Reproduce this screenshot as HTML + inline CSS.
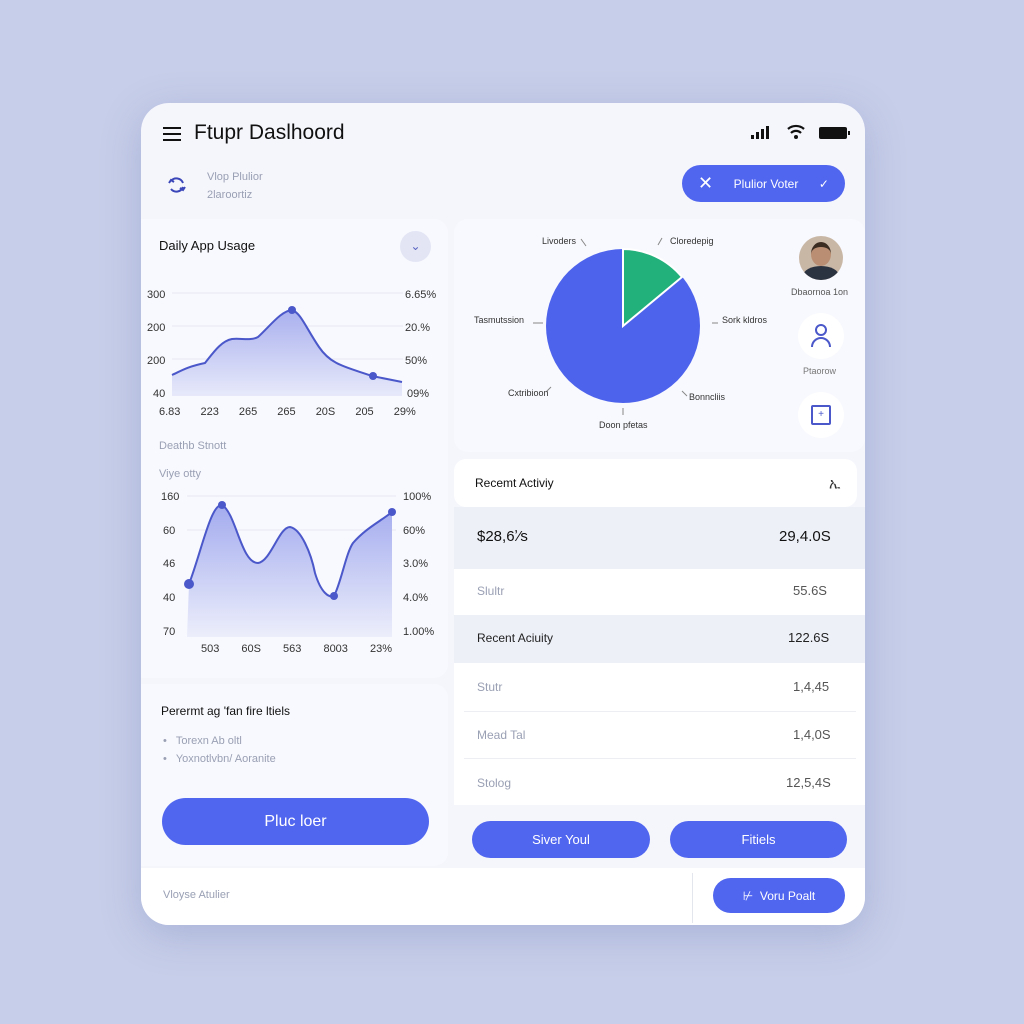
<!DOCTYPE html>
<html><head><meta charset="utf-8"><style>
*{margin:0;padding:0;box-sizing:border-box}
body{width:1024px;height:1024px;background:#c6cee9;font-family:"Liberation Sans",sans-serif;position:relative;overflow:hidden}
.a{position:absolute}
.card{left:141px;top:103px;width:724px;height:822px;background:#f5f6fc;border-radius:28px;overflow:hidden;box-shadow:0 10px 40px rgba(90,100,170,.25)}
.t{position:absolute;white-space:nowrap}
.btn{position:absolute;background:#5166ef;border-radius:24px;color:#fff;display:flex;align-items:center;justify-content:center;font-size:14px}
.s{font-size:11px;color:#333}
.g{color:#9aa0b4}
</style></head><body>
<div class="a card">
 <!-- header -->
 <div class="a" style="left:22px;top:24px;width:18px;height:2px;background:#111;box-shadow:0 6px 0 #111,0 12px 0 #111"></div>
 <div class="t" style="left:53px;top:18px;font-size:21px;color:#111">Ftupr Daslhoord</div>
 <svg class="a" style="left:610px;top:20px" width="105" height="20">
  <rect x="0" y="12" width="3" height="4" fill="#111"/><rect x="5" y="9" width="3" height="7" fill="#111"/><rect x="10" y="6" width="3" height="10" fill="#111"/><rect x="15" y="3" width="3" height="13" fill="#111"/>
  <path d="M37 6a12 12 0 0 1 16 0M40 10a7 7 0 0 1 10 0" stroke="#111" stroke-width="2.2" fill="none"/><circle cx="45" cy="14" r="2" fill="#111"/>
  <rect x="68" y="4" width="28" height="12" rx="2" fill="#111"/><rect x="97" y="8" width="2" height="4" fill="#111"/>
 </svg>
 <svg class="a" style="left:24px;top:70px" width="24" height="24"><path d="M6 8a7 7 0 0 1 12 2M18 14a7 7 0 0 1-12 2M4 10l2-3 3 2M20 14l-2 3-3-2" stroke="#3b47b8" stroke-width="2" fill="none"/></svg>
 <div class="t g" style="left:66px;top:68px;font-size:11px">Vlop Plulior</div>
 <div class="t g" style="left:66px;top:86px;font-size:11px">2laroortiz</div>
 <div class="btn" style="left:541px;top:62px;width:163px;height:37px;border-radius:19px;font-size:12px;justify-content:space-between;padding:0 16px"><span style="font-size:18px">✕</span><span>Plulior Voter</span><span>✓</span></div>
 <!-- left panel -->
 <div class="a" style="left:0;top:116px;width:307px;height:459px;background:#f8f9fe;border-radius:0 14px 14px 0"></div>
 <div class="t" style="left:18px;top:135px;font-size:13px;color:#111">Daily App Usage</div>
 <div class="a" style="left:259px;top:128px;width:31px;height:31px;border-radius:50%;background:#e3e5f5;color:#5a64c0;font-size:12px;text-align:center;line-height:31px">⌄</div>
 <svg class="a" style="left:0;top:180px" width="307" height="140">
  <g stroke="#e6e8f2"><line x1="31" y1="10" x2="262" y2="10"/><line x1="31" y1="43" x2="262" y2="43"/><line x1="31" y1="76" x2="262" y2="76"/></g>
  <defs><linearGradient id="f1" x1="0" y1="0" x2="0" y2="1"><stop offset="0" stop-color="#a9b0ee"/><stop offset="1" stop-color="#e7e9fa"/></linearGradient></defs>
  <path d="M31 92 C40 88,45 84,64 80 C72 70,80 58,91 56 C100 55,110 58,117 54 C130 42,140 28,151 27 C160 30,165 45,178 64 C190 82,205 84,231 93 L261 99 L261 113 L31 113Z" fill="url(#f1)"/>
  <path d="M31 92 C40 88,45 84,64 80 C72 70,80 58,91 56 C100 55,110 58,117 54 C130 42,140 28,151 27 C160 30,165 45,178 64 C190 82,205 84,231 93 L261 99" stroke="#4b58c9" stroke-width="2" fill="none"/>
  <circle cx="151" cy="27" r="4" fill="#4b58c9"/><circle cx="232" cy="93" r="4" fill="#4b58c9"/>
 </svg>
 <div class="s"><div class="t" style="left:6px;top:186px">300</div><div class="t" style="left:6px;top:219px">200</div><div class="t" style="left:6px;top:252px">200</div><div class="t" style="left:12px;top:285px">40</div>
 <div class="t" style="left:264px;top:186px">6.65%</div><div class="t" style="left:264px;top:219px">20.%</div><div class="t" style="left:264px;top:252px">50%</div><div class="t" style="left:266px;top:285px">09%</div>
 <div class="t" style="left:18px;top:303px;word-spacing:17px">6.83 223 265 265 20S 205 29%</div></div>
 <div class="t g" style="left:18px;top:337px;font-size:11px">Deathb Stnott</div>
 <div class="t g" style="left:18px;top:365px;font-size:11px">Viye otty</div>
 <svg class="a" style="left:0;top:380px" width="307" height="160">
  <g stroke="#e6e8f2"><line x1="46" y1="13" x2="255" y2="13"/><line x1="46" y1="47" x2="255" y2="47"/></g>
  <defs><linearGradient id="f2" x1="0" y1="0" x2="0" y2="1"><stop offset="0" stop-color="#a3abee"/><stop offset="1" stop-color="#eceefb"/></linearGradient></defs>
  <path d="M48 101 C60 70,70 20,81 22 C95 30,100 80,117 80 C130 78,138 44,149 44 C160 46,170 70,174 90 C180 110,188 115,193 113 C200 100,205 70,212 60 C225 45,240 38,251 29 L251 154 L46 154 Z" fill="url(#f2)"/>
  <path d="M48 101 C60 70,70 20,81 22 C95 30,100 80,117 80 C130 78,138 44,149 44 C160 46,170 70,174 90 C180 110,188 115,193 113 C200 100,205 70,212 60 C225 45,240 38,251 29" stroke="#4b58c9" stroke-width="2" fill="none"/>
  <circle cx="48" cy="101" r="5" fill="#4b58c9"/><circle cx="81" cy="22" r="4" fill="#4b58c9"/><circle cx="193" cy="113" r="4" fill="#4b58c9"/><circle cx="251" cy="29" r="4" fill="#4b58c9"/>
 </svg>
 <div class="s"><div class="t" style="left:20px;top:388px">160</div><div class="t" style="left:22px;top:422px">60</div><div class="t" style="left:22px;top:455px">46</div><div class="t" style="left:22px;top:489px">40</div><div class="t" style="left:22px;top:523px">70</div>
 <div class="t" style="left:262px;top:388px">100%</div><div class="t" style="left:262px;top:422px">60%</div><div class="t" style="left:262px;top:455px">3.0%</div><div class="t" style="left:262px;top:489px">4.0%</div><div class="t" style="left:262px;top:523px">1.00%</div>
 <div class="t" style="left:60px;top:540px;word-spacing:19px">503 60S 563 8003 23%</div></div>
 <!-- left bottom card -->
 <div class="a" style="left:0;top:581px;width:307px;height:182px;background:#f8f9fe;border-radius:0 14px 14px 0"></div>
 <div class="t" style="left:20px;top:601px;font-size:12px;color:#111">Perermt ag 'fan fire ltiels</div>
 <div class="t g" style="left:22px;top:632px;font-size:11px">•&nbsp;&nbsp; Torexn Ab oltl</div>
 <div class="t g" style="left:22px;top:650px;font-size:11px">•&nbsp;&nbsp; Yoxnotlvbn/ Aoranite</div>
 <div class="btn" style="left:21px;top:695px;width:267px;height:47px;font-size:16px">Pluc loer</div>
 <!-- pie panel -->
 <div class="a" style="left:313px;top:116px;width:411px;height:233px;background:#f8f9fe;border-radius:14px"></div>
 <svg class="a" style="left:313px;top:116px" width="411" height="233">
  <circle cx="169" cy="107" r="77" fill="#4e63ec"/>
  <path d="M169 107 L169 30 A77 77 0 0 1 228 58 Z" fill="#22b07b" stroke="#fff" stroke-width="2"/>
  <g stroke="#888" stroke-width="1"><line x1="127" y1="20" x2="132" y2="27"/><line x1="208" y1="19" x2="204" y2="26"/><line x1="79" y1="104" x2="89" y2="104"/><line x1="258" y1="104" x2="264" y2="104"/><line x1="92" y1="173" x2="97" y2="168"/><line x1="228" y1="172" x2="233" y2="177"/><line x1="169" y1="189" x2="169" y2="196"/></g>
 </svg>
 <div class="t" style="left:401px;top:133px;font-size:9px;color:#333">Livoders</div>
 <div class="t" style="left:529px;top:133px;font-size:9px;color:#333">Cloredepig</div>
 <div class="t" style="left:333px;top:212px;font-size:9px;color:#333">Tasmutssion</div>
 <div class="t" style="left:581px;top:212px;font-size:9px;color:#333">Sork kldros</div>
 <div class="t" style="left:367px;top:285px;font-size:9px;color:#333">Cxtribioon</div>
 <div class="t" style="left:548px;top:289px;font-size:9px;color:#333">Bonncliis</div>
 <div class="t" style="left:458px;top:317px;font-size:9px;color:#333">Doon pfetas</div>
 <div class="a" style="left:658px;top:133px;width:44px;height:44px;border-radius:50%;background:#c9b7a6;overflow:hidden"><div class="a" style="left:12px;top:6px;width:20px;height:24px;border-radius:50%;background:#b98e73;border-top:5px solid #3b2c22"></div><div class="a" style="left:4px;top:30px;width:36px;height:20px;border-radius:50%;background:#2c3340"></div></div>
 <div class="t" style="left:650px;top:184px;font-size:9px;color:#555">Dbaornoa 1on</div>
 <div class="a" style="left:657px;top:210px;width:46px;height:46px;border-radius:50%;background:#fff"></div>
 <svg class="a" style="left:668px;top:219px" width="24" height="28"><circle cx="12" cy="8" r="5" stroke="#4b58c9" stroke-width="2" fill="none"/><path d="M3 25a9 9 0 0 1 18 0" stroke="#4b58c9" stroke-width="2" fill="none"/></svg>
 <div class="t" style="left:662px;top:263px;font-size:9px;color:#777">Ptaorow</div>
 <div class="a" style="left:657px;top:289px;width:46px;height:46px;border-radius:50%;background:#fff"></div>
 <div class="a" style="left:670px;top:302px;width:20px;height:20px;border:2px solid #4b58c9;border-radius:2px;color:#4b58c9;font-size:10px;text-align:center;line-height:16px">+</div>
 <!-- recent activity -->
 <div class="a" style="left:313px;top:356px;width:403px;height:48px;background:#fff;border-radius:12px"></div>
 <div class="t" style="left:334px;top:373px;font-size:12px;color:#111">Recemt Activiy</div>
 <div class="t" style="left:688px;top:372px;font-size:14px;color:#333">ኢ</div>
 <div class="a" style="left:313px;top:404px;width:411px;height:62px;background:#eef0f8"></div>
 <div class="t" style="left:336px;top:425px;font-size:15px;color:#111">$28,6ʼ⁄s</div>
 <div class="t" style="left:638px;top:425px;font-size:15px;color:#111">29,4.0S</div>
 <div class="a" style="left:313px;top:466px;width:411px;height:46px;background:#fff"></div>
 <div class="t g" style="left:336px;top:481px;font-size:12px">Slultr</div><div class="t" style="left:652px;top:480px;font-size:13px;color:#555">55.6S</div>
 <div class="a" style="left:313px;top:512px;width:411px;height:48px;background:#eef0f8"></div>
 <div class="t" style="left:336px;top:528px;font-size:12px;color:#222">Recent Aciuity</div><div class="t" style="left:647px;top:527px;font-size:13px;color:#222">122.6S</div>
 <div class="a" style="left:313px;top:560px;width:411px;height:142px;background:#fff"></div>
 <div class="a" style="left:323px;top:608px;width:392px;height:1px;background:#eceef4"></div>
 <div class="a" style="left:323px;top:655px;width:392px;height:1px;background:#eceef4"></div>
 <div class="t g" style="left:336px;top:577px;font-size:12px">Stutr</div><div class="t" style="left:652px;top:576px;font-size:13px;color:#555">1,4,45</div>
 <div class="t g" style="left:336px;top:625px;font-size:12px">Mead Tal</div><div class="t" style="left:652px;top:624px;font-size:13px;color:#555">1,4,0S</div>
 <div class="t g" style="left:336px;top:673px;font-size:12px">Stolog</div><div class="t" style="left:645px;top:672px;font-size:13px;color:#555">12,5,4S</div>
 <div class="btn" style="left:331px;top:718px;width:178px;height:37px;font-size:13px">Siver Youl</div>
 <div class="btn" style="left:529px;top:718px;width:177px;height:37px;font-size:13px">Fitiels</div>
 <!-- footer -->
 <div class="a" style="left:0;top:765px;width:724px;height:57px;background:#fff"></div>
 <div class="a" style="left:551px;top:770px;width:1px;height:50px;background:#e4e6ee"></div>
 <div class="t g" style="left:22px;top:786px;font-size:11px">Vloyse Atulier</div>
 <div class="btn" style="left:572px;top:775px;width:132px;height:35px;font-size:12px">⊬&nbsp; Voru Poalt</div>
</div>
</body></html>
